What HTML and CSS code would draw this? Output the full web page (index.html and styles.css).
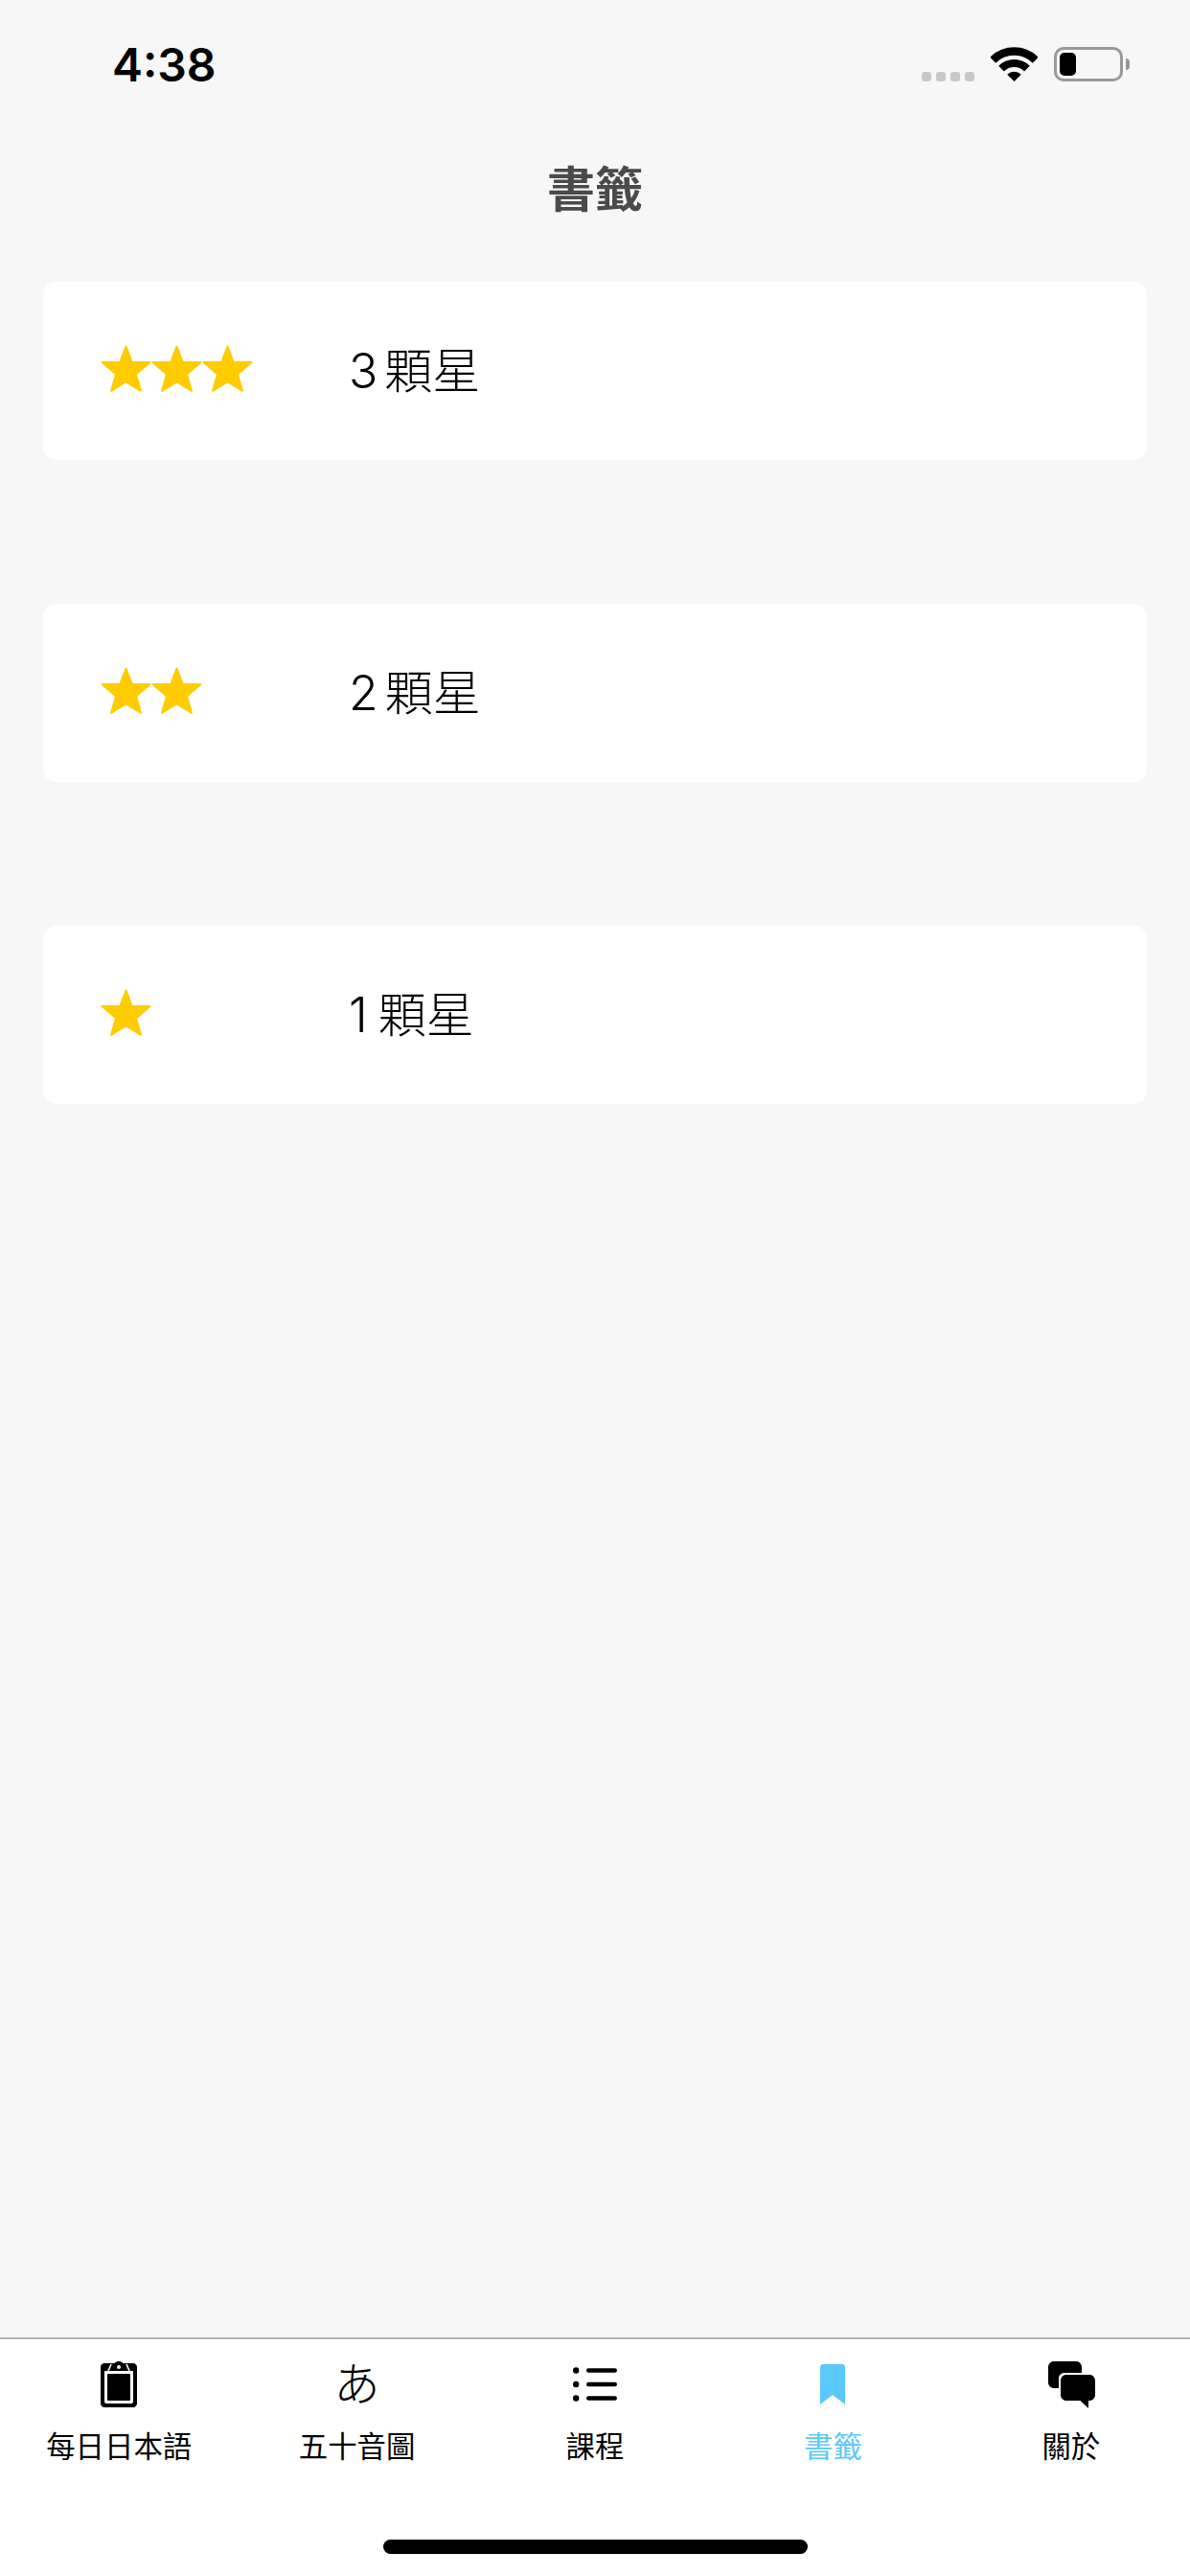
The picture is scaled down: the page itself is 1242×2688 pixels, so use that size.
FILE: index.html
```html
<!DOCTYPE html>
<html lang="zh-Hant">
<head>
    <meta charset="UTF-8">
    <meta name="viewport" content="width=device-width, initial-scale=1.0">
    <title>書籤</title>
    <link rel="stylesheet" href="styles.css">
</head>
<body>

<div class="screen">
    <div class="status-bar">
        <span class="time">4:38</span>
        <div class="status-icons">
            <div class="signal"><i></i><i></i><i></i><i></i></div>
            <svg class="wifi" viewBox="0 0 49 36" width="49" height="36">
                <path d="M2.2 13.7A31.5 31.5 0 0 1 46.8 13.7" fill="none" stroke="#000" stroke-width="8.5"/>
                <path d="M11.1 22.6A19 19 0 0 1 37.9 22.6" fill="none" stroke="#000" stroke-width="8"/>
                <path d="M24.5 36L17.2 28.7A10.3 10.3 0 0 1 31.8 28.7Z" fill="#000"/>
            </svg>
            <div class="battery"><div class="battery-level"></div></div>
            <div class="battery-cap"></div>
        </div>
    </div>

    <h1 class="title">書籤</h1>

    <div class="list">
        <div class="card">
            <div class="stars">
                <svg class="star" viewBox="0 0 53 50"><use href="#star-shape"/></svg>
                <svg class="star" viewBox="0 0 53 50"><use href="#star-shape"/></svg>
                <svg class="star" viewBox="0 0 53 50"><use href="#star-shape"/></svg>
            </div>
            <span class="card-label">3 顆星</span>
        </div>
        <div class="card">
            <div class="stars">
                <svg class="star" viewBox="0 0 53 50"><use href="#star-shape"/></svg>
                <svg class="star" viewBox="0 0 53 50"><use href="#star-shape"/></svg>
            </div>
            <span class="card-label">2 顆星</span>
        </div>
        <div class="card">
            <div class="stars">
                <svg class="star" viewBox="0 0 53 50"><use href="#star-shape"/></svg>
            </div>
            <span class="card-label card-label-one">1 顆星</span>
        </div>
    </div>

    <div class="tab-bar">
        <div class="tabs">
            <div class="tab">
                <div class="tab-icon">
                    <svg viewBox="0 0 38 48" width="38" height="48">
                        <path d="M4 2H14L15 1.5C16 .5 17.5 0 19 0S22 .5 23 1.5L24 2H34C36.2 2 38 3.8 38 6V44C38 46.2 36.2 48 34 48H4C1.8 48 0 46.2 0 44V6C0 3.8 1.8 2 4 2Z" fill="#000"/>
                        <path d="M4 10H34V42C34 43.1 33.1 44 32 44H6C4.9 44 4 43.1 4 42Z" fill="#fff"/>
                        <path d="M8 10L11 3M30 10L27 3" fill="none" stroke="#fff" stroke-width="1.6"/>
                        <circle cx="19" cy="6" r="2" fill="#fff"/>
                        <rect x="7" y="13" width="24" height="28" rx="1" fill="#000"/>
                    </svg>
                </div>
                <span class="tab-label">每日日本語</span>
            </div>
            <div class="tab">
                <div class="tab-icon"><span class="kana">あ</span></div>
                <span class="tab-label">五十音圖</span>
            </div>
            <div class="tab">
                <div class="tab-icon">
                    <svg viewBox="0 0 46 36" width="46" height="36">
                        <circle cx="3.2" cy="3.5" r="3.2" fill="#000"/>
                        <circle cx="3.2" cy="18" r="3.2" fill="#000"/>
                        <circle cx="3.2" cy="32.5" r="3.2" fill="#000"/>
                        <rect x="14" y="1.3" width="32" height="4.4" rx="2.2" fill="#000"/>
                        <rect x="14" y="15.8" width="32" height="4.4" rx="2.2" fill="#000"/>
                        <rect x="14" y="30.3" width="32" height="4.4" rx="2.2" fill="#000"/>
                    </svg>
                </div>
                <span class="tab-label">課程</span>
            </div>
            <div class="tab tab-active">
                <div class="tab-icon">
                    <svg viewBox="0 0 26 42" width="26" height="42">
                        <path d="M3 0H23C24.7 0 26 1.3 26 3V42L13 32L0 42V3C0 1.3 1.3 0 3 0Z" fill="#5ac8fa"/>
                    </svg>
                </div>
                <span class="tab-label">書籤</span>
            </div>
            <div class="tab">
                <div class="tab-icon tab-icon-chat">
                    <svg viewBox="0 0 50 49" width="50" height="49">
                        <path d="M6 0H29C32.3 0 35 2.7 35 6V12H17C13.5 12 11 14.5 11 18V28H6C2.7 28 0 25.3 0 22V6C0 2.7 2.7 0 6 0Z" fill="#000"/>
                        <path d="M19 14H43C46.3 14 49 16.7 49 20V35C49 38.3 46.3 41 43 41H42V49L33.5 41H19C15.7 41 13 38.3 13 35V20C13 16.7 15.7 14 19 14Z" fill="#000"/>
                    </svg>
                </div>
                <span class="tab-label">關於</span>
            </div>
        </div>
        <div class="home-bar"></div>
    </div>
</div>

<svg class="defs" width="0" height="0">
    <defs>
        <polygon id="star-shape" points="26.5,1.5 32.8,18 51.5,18 37,30.5 42,47.8 26.5,38.5 11,47.8 16,30.5 1.5,18 20.2,18" fill="#ffcc00" stroke="#ffcc00" stroke-width="2" stroke-linejoin="round"/>
    </defs>
</svg>

</body>
</html>
```
FILE: styles.css
```css
* {
    margin: 0;
    padding: 0;
    box-sizing: border-box;
}

body {
    font-family: Inter, 'Noto Sans CJK TC', sans-serif;
    background-color: #f7f7f7;
    overflow: hidden;
}

.screen {
    display: flex;
    flex-direction: column;
    width: 1242px;
    height: 2688px;
}

/* Status bar */
.status-bar {
    display: flex;
    justify-content: space-between;
    align-items: flex-start;
    height: 100px;
    padding: 49px 63px 0 117px;
}

.time {
    font-size: 48px;
    font-weight: 600;
    line-height: 38px;
    color: #000;
}

.status-icons {
    display: flex;
    align-items: flex-start;
}

.signal {
    display: flex;
    gap: 5px;
    margin-top: 26px;
    margin-right: 17px;
}

.signal i {
    display: block;
    width: 10px;
    height: 10px;
    border-radius: 3px;
    background: #c8c8c8;
}

.wifi {
    margin-right: 17px;
}

.battery {
    width: 72px;
    height: 36px;
    padding: 3px 0 0 3px;
    border: 3px solid #999;
    border-radius: 10px;
}

.battery-level {
    width: 17px;
    height: 24px;
    background: #000;
    border-radius: 5px;
}

.battery-cap {
    width: 4px;
    height: 12px;
    margin: 12px 0 0 3px;
    background: #999;
    border-radius: 0 4px 4px 0;
}

/* Title */
.title {
    height: 194px;
    padding-top: 63px;
    text-align: center;
    font-size: 50px;
    font-weight: 600;
    line-height: 70px;
    color: #4a4a4a;
}

/* Cards */
.list {
    display: flex;
    flex-direction: column;
    gap: 150px;
    padding: 0 45px;
}

.card {
    display: flex;
    align-items: center;
    height: 186px;
    padding-left: 60px;
    background: #fff;
    border-radius: 14px;
}

.stars {
    display: flex;
    width: 259px;
    margin-top: -5px;
}

.star {
    display: block;
    width: 53px;
    height: 50px;
}

.card-label {
    font-size: 50px;
    font-weight: 300;
    word-spacing: -7px;
    color: #000;
    line-height: 60px;
}

.card-label-one {
    word-spacing: -3px;
}

/* Tab bar */
.tab-bar {
    margin-top: auto;
    height: 249px;
    background: #fff;
    border-top: 2px solid #b4b4b4;
}

.tabs {
    display: grid;
    grid-template-columns: repeat(5, 1fr);
}

.tab {
    display: flex;
    flex-direction: column;
    align-items: center;
}

.tab-icon {
    display: flex;
    justify-content: center;
    align-items: center;
    height: 52px;
    margin-top: 21px;
}

.tab-icon-chat {
    margin-left: 2px;
}

.kana {
    font-size: 48px;
    font-weight: 300;
    line-height: 52px;
    color: #000;
}

.tab-label {
    margin-top: 21px;
    font-size: 30.4px;
    line-height: 36px;
    color: #000;
}

.tab-active .tab-label {
    color: #5ac8fa;
}

.home-bar {
    width: 443px;
    height: 15px;
    margin: 79px auto 0;
    background: #000;
    border-radius: 8px;
}

.defs {
    position: absolute;
}
```
